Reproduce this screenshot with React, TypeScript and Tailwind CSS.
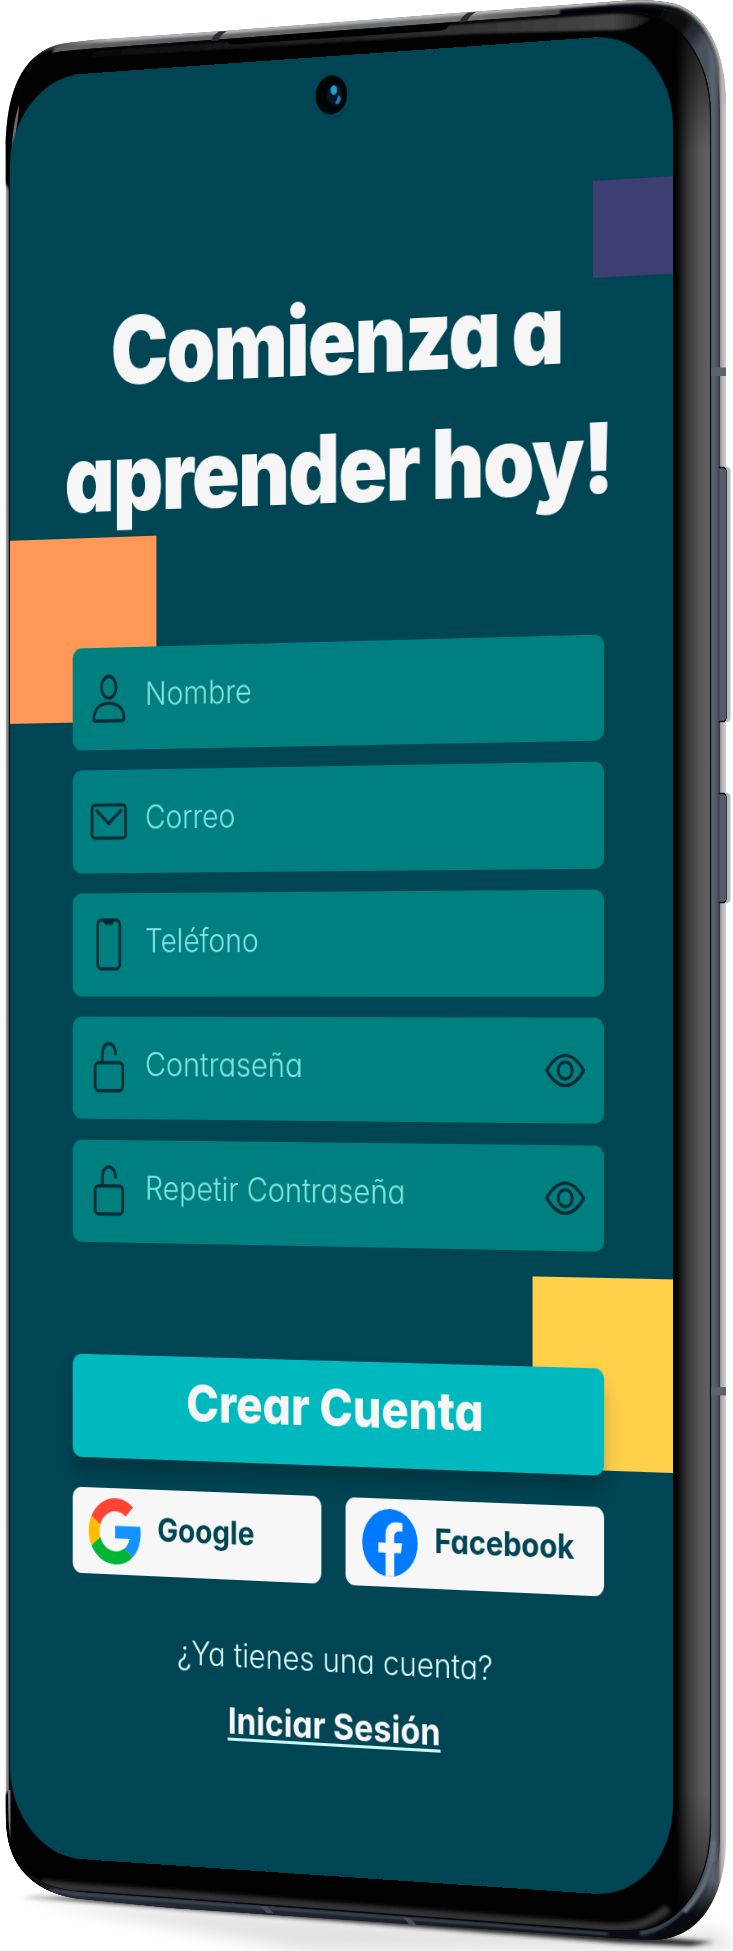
import React from "react";

const LABEL = "font-['Inter'] text-[32px] leading-none whitespace-nowrap [font-feature-settings:'cv11','ss03']";

const BODY =
  "M5.7 146 C7 98 18 45 76 42 L93 40 L224 31 L467 12.3 L608 2 C640 -1 662 0 678 5 C704 14 726 48 726 104 L726 1840 C726 1890 704 1938 655 1940 L631 1939 L173 1908 L77 1898.500 C45 1894 20 1877 11 1850 C7 1838 5.700 1826 5.700 1806 Z";

const BEZEL =
  "M9.500 200 C8.500 120 14 57 60 52 L93 49 L210 40.700 L467 21.700 L608 11.700 C640 10 662 15 679 31 C700 54 710.500 80 710.500 118 L710.500 1825 C710 1876 686 1929 631 1930.500 L608 1930.700 L173 1898 L77 1891 C50 1888 33 1881 18 1858 C10 1842 9 1825 9.500 1790 Z";

function Chassis() {
  return (
    <svg className="absolute inset-0 h-[1951px] w-[733px]" viewBox="0 0 733 1951" aria-hidden="true">
      <defs>
        <clipPath id="bodyClip">
          <path d={BODY} />
        </clipPath>
        <clipPath id="bezelClip">
          <path d={BEZEL} />
        </clipPath>
        <linearGradient id="metal" x1="0" x2="733" y1="0" y2="0" gradientUnits="userSpaceOnUse">
          <stop offset="0.008" stopColor="#b0b2b3" />
          <stop offset="0.012" stopColor="#5c5f61" />
          <stop offset="0.3" stopColor="#5f6264" />
          <stop offset="0.65" stopColor="#707375" />
          <stop offset="0.8" stopColor="#3c3f42" />
          <stop offset="0.92" stopColor="#0c0d0f" />
          <stop offset="0.98" stopColor="#5c5f64" />
          <stop offset="0.984" stopColor="#a9a9ac" />
          <stop offset="0.991" stopColor="#d4d4d6" />
        </linearGradient>
        <linearGradient id="edgeLight" x1="30" x2="110" y1="0" y2="0" gradientUnits="userSpaceOnUse">
          <stop offset="0" stopColor="#1a1b1c" />
          <stop offset="1" stopColor="#b4b6b7" />
        </linearGradient>
        <linearGradient id="slate" x1="706" x2="721" y1="0" y2="0" gradientUnits="userSpaceOnUse">
          <stop offset="0" stopColor="#4a525e" />
          <stop offset="0.45" stopColor="#5b6370" />
          <stop offset="0.75" stopColor="#4d5460" />
          <stop offset="1" stopColor="#262a32" />
        </linearGradient>
        <linearGradient id="slateTop" x1="655" x2="700" y1="18" y2="48" gradientUnits="userSpaceOnUse">
          <stop offset="0" stopColor="#050607" />
          <stop offset="0.5" stopColor="#0a0c0f" />
          <stop offset="1" stopColor="#0a0c0f" stopOpacity="0" />
        </linearGradient>
        <linearGradient id="bezel" x1="673" x2="711" y1="0" y2="0" gradientUnits="userSpaceOnUse">
          <stop offset="0" stopColor="#000" />
          <stop offset="0.1" stopColor="#050505" />
          <stop offset="0.4" stopColor="#393939" />
          <stop offset="0.7" stopColor="#575757" />
          <stop offset="1" stopColor="#636363" />
        </linearGradient>
        <linearGradient id="fadeTop" x1="0" x2="0" y1="20" y2="150" gradientUnits="userSpaceOnUse">
          <stop offset="0" stopColor="#000" />
          <stop offset="0.25" stopColor="#000" stopOpacity="0.55" />
          <stop offset="1" stopColor="#000" stopOpacity="0" />
        </linearGradient>
        <linearGradient id="fadeBottom" x1="0" x2="0" y1="1790" y2="1915" gradientUnits="userSpaceOnUse">
          <stop offset="0" stopColor="#000" stopOpacity="0" />
          <stop offset="0.6" stopColor="#000" stopOpacity="0.35" />
          <stop offset="1" stopColor="#000" />
        </linearGradient>
        <linearGradient id="topSheen" x1="60" x2="655" y1="0" y2="0" gradientUnits="userSpaceOnUse">
          <stop offset="0" stopColor="#222" stopOpacity="0.2" />
          <stop offset="0.5" stopColor="#242424" />
          <stop offset="0.93" stopColor="#464646" />
          <stop offset="1" stopColor="#111" />
        </linearGradient>
        <linearGradient id="bottomRim" x1="0" x2="733" y1="0" y2="0" gradientUnits="userSpaceOnUse">
          <stop offset="0.02" stopColor="#020304" />
          <stop offset="0.1" stopColor="#262c37" />
          <stop offset="0.5" stopColor="#1c222c" />
          <stop offset="0.85" stopColor="#0a0e14" />
        </linearGradient>
        <linearGradient id="cornerShade" x1="712" x2="690" y1="1880" y2="1925" gradientUnits="userSpaceOnUse">
          <stop offset="0" stopColor="#070a0f" stopOpacity="0" />
          <stop offset="0.8" stopColor="#070a0f" />
        </linearGradient>
        <filter id="soft" x="-20%" y="-100%" width="140%" height="300%">
          <feGaussianBlur stdDeviation="8" />
        </filter>
        <filter id="tight" x="-20%" y="-100%" width="140%" height="300%">
          <feGaussianBlur stdDeviation="2" />
        </filter>
        <filter id="fine" x="-5%" y="-5%" width="110%" height="110%">
          <feGaussianBlur stdDeviation="1.2" />
        </filter>
      </defs>

      <path d="M24 1900 L640 1938 L722 1930 L733 1951 L300 1951 Z" fill="#e2e2e2" filter="url(#soft)" />
      <path d="M22 1897 L110 1898 L640 1936 L714 1942 L690 1946 L620 1943 L80 1901 Z" fill="#222" filter="url(#tight)" />

      <rect x="717" y="467" width="13.500" height="255" rx="4" fill="#b9b9bb" />
      <rect x="717" y="793" width="13.500" height="110" rx="4" fill="#b9b9bb" />

      <path d={BODY} fill="url(#metal)" />
      <g clipPath="url(#bodyClip)">
        <path d="M0 175 L0 30 H60 L52 54 L20 110 L9.500 190 Z M0 1800 L9.500 1790 L20 1860 L60 1890 V1910 H0 Z" fill="#060606" filter="url(#fine)" />
        <path d="M30 58 C42 47 58 43 76 42 L93 40 L224 31 L467 12.300 L608 2" fill="none" stroke="url(#edgeLight)" strokeWidth="6" filter="url(#fine)" />
        <path d="M608 2 C640 -1 662 0 678 5 C704 14 726 48 726 104" fill="none" stroke="#b4b6b7" strokeWidth="5" filter="url(#fine)" />
        <path d="M638 8 C660 6 676 11 690 20 C712 38 720 68 720 110 L720 1840 C719 1900 690 1939 655 1940 L600 1937 L640 1900 L690 1800 V120 L600 14 Z" fill="url(#slate)" />
        <path d="M560 10 C620 4 660 4 680 13 C700 22 712 40 716 60 L700 72 L676 40 L640 14 L560 17 Z" fill="url(#slateTop)" filter="url(#fine)" />
        <path d="M6 1810 L20 1850 L608 1926 L650 1926 L690 1880 L724 1880 L720 1945 L631 1945 L6 1925 Z" fill="url(#cornerShade)" />
        <path d="M6 1820 L20 1860 L608 1922 L650 1928 L662 1945 L631 1945 L6 1925 Z" fill="url(#bottomRim)" />
        <path d="M640 1933 C672 1930 700 1895 712 1862" fill="none" stroke="#39424f" strokeWidth="5" filter="url(#fine)" />
        <path d="M684 1912 C700 1895 712 1875 714 1840" fill="none" stroke="#636b78" strokeWidth="5" filter="url(#fine)" />
        <path d="M50 1890 L77 1894 L173 1901 L608 1934" fill="none" stroke="#4b5362" strokeWidth="2" filter="url(#fine)" />
      </g>

      <path d="M719.500 467.500 h4 a3 3 0 0 1 3 3 v248 a3 3 0 0 1 -3 3 h-4 z" fill="#555d69" />
      <path d="M719.500 793.500 h4 a3 3 0 0 1 3 3 v103 a3 3 0 0 1 -3 3 h-4 z" fill="#555d69" />
      <path d="M719 467.500 h5 l2 2 M719 721.500 h5 l2 -2 M719 793.500 h5 l2 2 M719 902.500 h5 l2 -2" fill="none" stroke="#111419" strokeWidth="1.400" />
      <path d="M726.500 470 V719 M726.500 796 V900" fill="none" stroke="#30353e" strokeWidth="1" />

      <path d={BEZEL} fill="#020202" stroke="#050608" strokeWidth="1" />
      <g clipPath="url(#bezelClip)">
        <rect x="672.500" y="10" width="38" height="1925" fill="url(#bezel)" />
        <rect x="672" y="10" width="40" height="190" fill="url(#fadeTop)" />
        <rect x="672" y="1760" width="40" height="175" fill="url(#fadeBottom)" />
        <path d="M93 51 L210 43 L467 24 L608 14 C625 13 640 14 650 19 C642 26 630 30 615 30 L467 34 L210 50 L93 57 Z" fill="url(#topSheen)" filter="url(#fine)" />
        <path d="M40 1884 L77 1888 L173 1895 L608 1928 C640 1929 655 1920 668 1908" fill="none" stroke="#3d3d3d" strokeWidth="9" opacity="0.85" filter="url(#tight)" />
      </g>
      <path d="M60 52 L93 49 L210 40.700 L467 21.700 L608 11.700 C640 10 662 15 679 31 C700 54 710.500 80 710.500 118 L710.500 1825 C710 1876 686 1929 631 1930.500 L608 1930.700 L173 1898 L77 1891" fill="none" stroke="#08090b" strokeWidth="1.200" />
      <path d="M11.500 170 C11 140 14 120 19 105 C19 120 14 135 12.500 170 Z" fill="#6a6c6d" />
      <path d="M10.500 1790 C10.500 1815 10.500 1830 10.300 1838 C8.500 1826 8 1810 8 1790 Z" fill="#77797a" />

      <path d="M214 40.500 L451 23 L446 29 Q444 30 440 30.500 L232 44.500 Q229 44.500 227 41 Z" fill="#000" />
      <path d="M219 31.500 L227 31 Q220 35 219 40.500 L211 41 Q213 35 219 31.500 Z" fill="#2a2e34" />
      <path d="M468 12.500 L476 12 Q469 16 467 21.500 L459 22.500 Q462 16 468 12.500 Z" fill="#2a2e34" />
      <path d="M260 1906 L267 1906.500 L274 1913.500 L267 1913 Z M403 1917.500 L410 1918 L417 1925.500 L410 1925 Z" fill="#49505b" />
      <rect x="711" y="367.500" width="15" height="8.500" fill="#5d636d" />
      <rect x="711" y="1387" width="15" height="8.500" fill="#5d636d" />
    </svg>
  );
}

const stroke = { fill: "none", stroke: "#012a33", strokeWidth: 3.2, strokeLinecap: "round", strokeLinejoin: "round" } as const;

function UserIcon() {
  return (
    <svg viewBox="0 0 46 52" className="h-[52px] w-[46px]" {...stroke}>
      <ellipse cx="23" cy="14.500" rx="9" ry="10.800" />
      <path d="M4.500 47 C4 36 12 30.500 23 30.500 C34 30.500 42.500 36 41.800 46.500 C41.800 47.300 41 47.800 40 47.800 L6 48.200 Q4.500 48.200 4.500 47 Z" />
    </svg>
  );
}

function MailIcon() {
  return (
    <svg viewBox="0 0 46 52" className="h-[52px] w-[46px]" {...stroke}>
      <rect x="2.200" y="9" width="41.600" height="33" rx="3.500" />
      <path d="M8 14.500 L23 27.500 L38 14.500" />
    </svg>
  );
}

function PhoneIcon() {
  return (
    <svg viewBox="0 0 46 52" className="h-[52px] w-[46px]" {...stroke}>
      <rect x="9.300" y="1.600" width="27.400" height="48.800" rx="5" />
      <path d="M17.500 2.500 L19.500 5 H26.500 L28.500 2.500 Z" fill="#012a33" />
    </svg>
  );
}

function LockIcon() {
  return (
    <svg viewBox="0 0 46 52" className="h-[52px] w-[46px]" {...stroke}>
      <rect x="6" y="20.800" width="34.500" height="28" rx="4.500" />
      <path d="M15 20.500 V12.500 C15 -1.500 31 -1.500 31.500 12" />
    </svg>
  );
}

function EyeIcon() {
  return (
    <svg viewBox="0 0 48 34" className="h-[34px] w-[48px]" {...stroke}>
      <path d="M2.500 17 C9 7.500 16 2.500 24 2.500 C32 2.500 39 7.500 45.500 17 C39 26.500 32 31.500 24 31.500 C16 31.500 9 26.500 2.500 17 Z" />
      <circle cx="24" cy="17" r="8.200" />
    </svg>
  );
}

function GoogleIcon() {
  return (
    <svg viewBox="0 0 48 48" className="h-[66px] w-[66px]">
      <path fill="#ff4433" d="M24 9.500c3.540 0 6.710 1.220 9.210 3.600l6.850-6.850C35.900 2.380 30.470 0 24 0 14.620 0 6.510 5.380 2.560 13.220l7.980 6.190C12.430 13.720 17.740 9.500 24 9.500z" />
      <path fill="#1492ff" d="M46.980 24.550c0-1.570-.150-3.090-.380-4.550H24v9.020h12.940c-.580 2.960-2.260 5.480-4.780 7.180l7.730 6c4.510-4.180 7.090-10.360 7.090-17.650z" />
      <path fill="#ffbc00" d="M10.530 28.590c-.480-1.450-.760-2.990-.760-4.590s.270-3.140.760-4.590l-7.980-6.190C.920 16.460 0 20.120 0 24c0 3.880.920 7.540 2.560 10.780l7.970-6.190z" />
      <path fill="#00b436" d="M24 48c6.480 0 11.930-2.130 15.890-5.810l-7.730-6c-2.150 1.450-4.920 2.300-8.160 2.300-6.260 0-11.570-4.220-13.470-9.910l-7.980 6.190C6.510 42.620 14.620 48 24 48z" />
    </svg>
  );
}

function FacebookIcon() {
  return (
    <svg viewBox="0 0 48 48" className="h-[66px] w-[66px]">
      <circle cx="24" cy="24" r="24" fill="#007bff" />
      <path fill="#f7f7f7" d="M20.200 47.800V31H14v-7h6.200v-5.400c0-6.100 3.600-9.400 9.200-9.400 2.700 0 5.400.500 5.400.500v5.900h-3c-3 0-4 1.900-4 3.800V24h6.800l-1.100 7h-5.700v16.800z" />
    </svg>
  );
}

type FieldProps = { label: string; icon: React.ReactNode; secret?: boolean; fit: string };

function Field({ label, icon, secret, fit }: FieldProps) {
  return (
    <div className="flex h-[102.500px] w-full shrink-0 items-center rounded-[11px] bg-[#007f80] pr-[21px] pl-[22px]">
      {icon}
      <span className={`${LABEL} -mt-[7px] ml-[21.500px] origin-left font-light text-[#83e4e3] ${fit}`}>{label}</span>
      {secret && (
        <span className="ml-auto">
          <EyeIcon />
        </span>
      )}
    </div>
  );
}

export default function App() {
  return (
    <main className="relative h-[1951px] w-[733px] overflow-hidden bg-white">
      <Chassis />
      <section className="absolute top-0 left-0 flex h-[1784px] w-[796px] origin-top-left flex-col items-center overflow-hidden rounded-[90px] bg-[#004554] px-[79.400px] [transform:matrix3d(0.795458,-0.06173,0,-0.00006222,0,1,0,0,0,0,1,0,9.84,79.5,0,1.00494)]">
        <div className="absolute top-[138px] left-[704px] h-[93px] w-[92px] bg-[#3d3f72]" />
        <div className="absolute top-[464px] left-0 h-[184px] w-[182.500px] bg-[#ff9757]" />
        <div className="absolute top-[1191.600px] left-[634px] h-[185px] w-[162px] bg-[#ffd04a]" />
        <div className="absolute top-[18.500px] left-[377px] h-[38px] w-[38px] rounded-full bg-[#020507]">
          <svg viewBox="0 0 38 38" className="h-full w-full">
            <ellipse cx="23" cy="19" rx="9" ry="10" fill="#0a1524" />
            <ellipse cx="22" cy="14.500" rx="4" ry="4.500" fill="#18a3d8" />
            <path d="M27 20 c4 0 4 4 2 7 c-3 3 -6 1 -5 -1 c1 -1 2 -1 3 -6 z" fill="#1583b4" />
          </svg>
        </div>

        <h1 className="relative mt-[216px] flex shrink-0 flex-col items-center font-['Inter'] text-[93px] leading-[125.700px] font-black tracking-[-0.020em] whitespace-nowrap text-[#f6f6f6] [font-feature-settings:'cv11'] [word-spacing:-0.030em]">
          <span className="scale-x-[1.025]">Comienza a</span>
          <span className="scale-x-[1.038]">aprender hoy!</span>
        </h1>

        <form className="relative mt-[106.200px] flex w-full shrink-0 flex-col gap-[20.300px]">
          <Field label="Nombre" icon={<UserIcon />} fit="scale-x-[1.09]" />
          <Field label="Correo" icon={<MailIcon />} fit="scale-x-[1.08]" />
          <Field label="Teléfono" icon={<PhoneIcon />} fit="scale-x-[1.075]" />
          <Field label="Contraseña" icon={<LockIcon />} fit="scale-x-[1.106]" secret />
          <Field label="Repetir Contraseña" icon={<LockIcon />} fit="scale-x-[1.096]" secret />
        </form>

        <button className="relative mt-[112px] flex h-[103px] w-full shrink-0 items-center justify-center rounded-[11px] bg-[#00b9be] shadow-[0_14px_18px_rgba(0,0,0,0.22)]">
          <span className="-mt-[13px] scale-x-[1.055] font-['Inter'] text-[51px] leading-none font-extrabold whitespace-nowrap text-[#f6f6f6] [font-feature-settings:'cv11']">Crear Cuenta</span>
        </button>

        <div className="relative mt-[30px] flex w-full shrink-0 gap-[29px]">
          <button className="flex h-[86px] flex-1 items-center rounded-[11px] bg-[#f7f7f7] pl-[20px]">
            <GoogleIcon />
            <span className={`${LABEL} -mt-[6px] ml-[18.500px] origin-left scale-x-[1.07] font-bold text-[#004554]`}>Google</span>
          </button>
          <button className="flex h-[86px] flex-1 items-center rounded-[11px] bg-[#f7f7f7] pl-[20px]">
            <FacebookIcon />
            <span className={`${LABEL} -mt-[6px] ml-[20px] origin-left scale-x-[1.062] font-bold text-[#004554]`}>Facebook</span>
          </button>
        </div>

        <p className={`${LABEL} relative mt-[59px] shrink-0 scale-x-[1.095] font-light text-[#ddfafa]`}>¿Ya tienes una cuenta?</p>
        <a className="relative mt-[30px] shrink-0 scale-x-[1.072] font-['Inter'] text-[36px] leading-none font-bold whitespace-nowrap text-[#f6f6f6] underline decoration-[#c9f5f3] decoration-[2.500px] underline-offset-[4px] [font-feature-settings:'cv11'] [text-decoration-skip-ink:none]">
          Iniciar Sesión
        </a>
      </section>
    </main>
  );
}
